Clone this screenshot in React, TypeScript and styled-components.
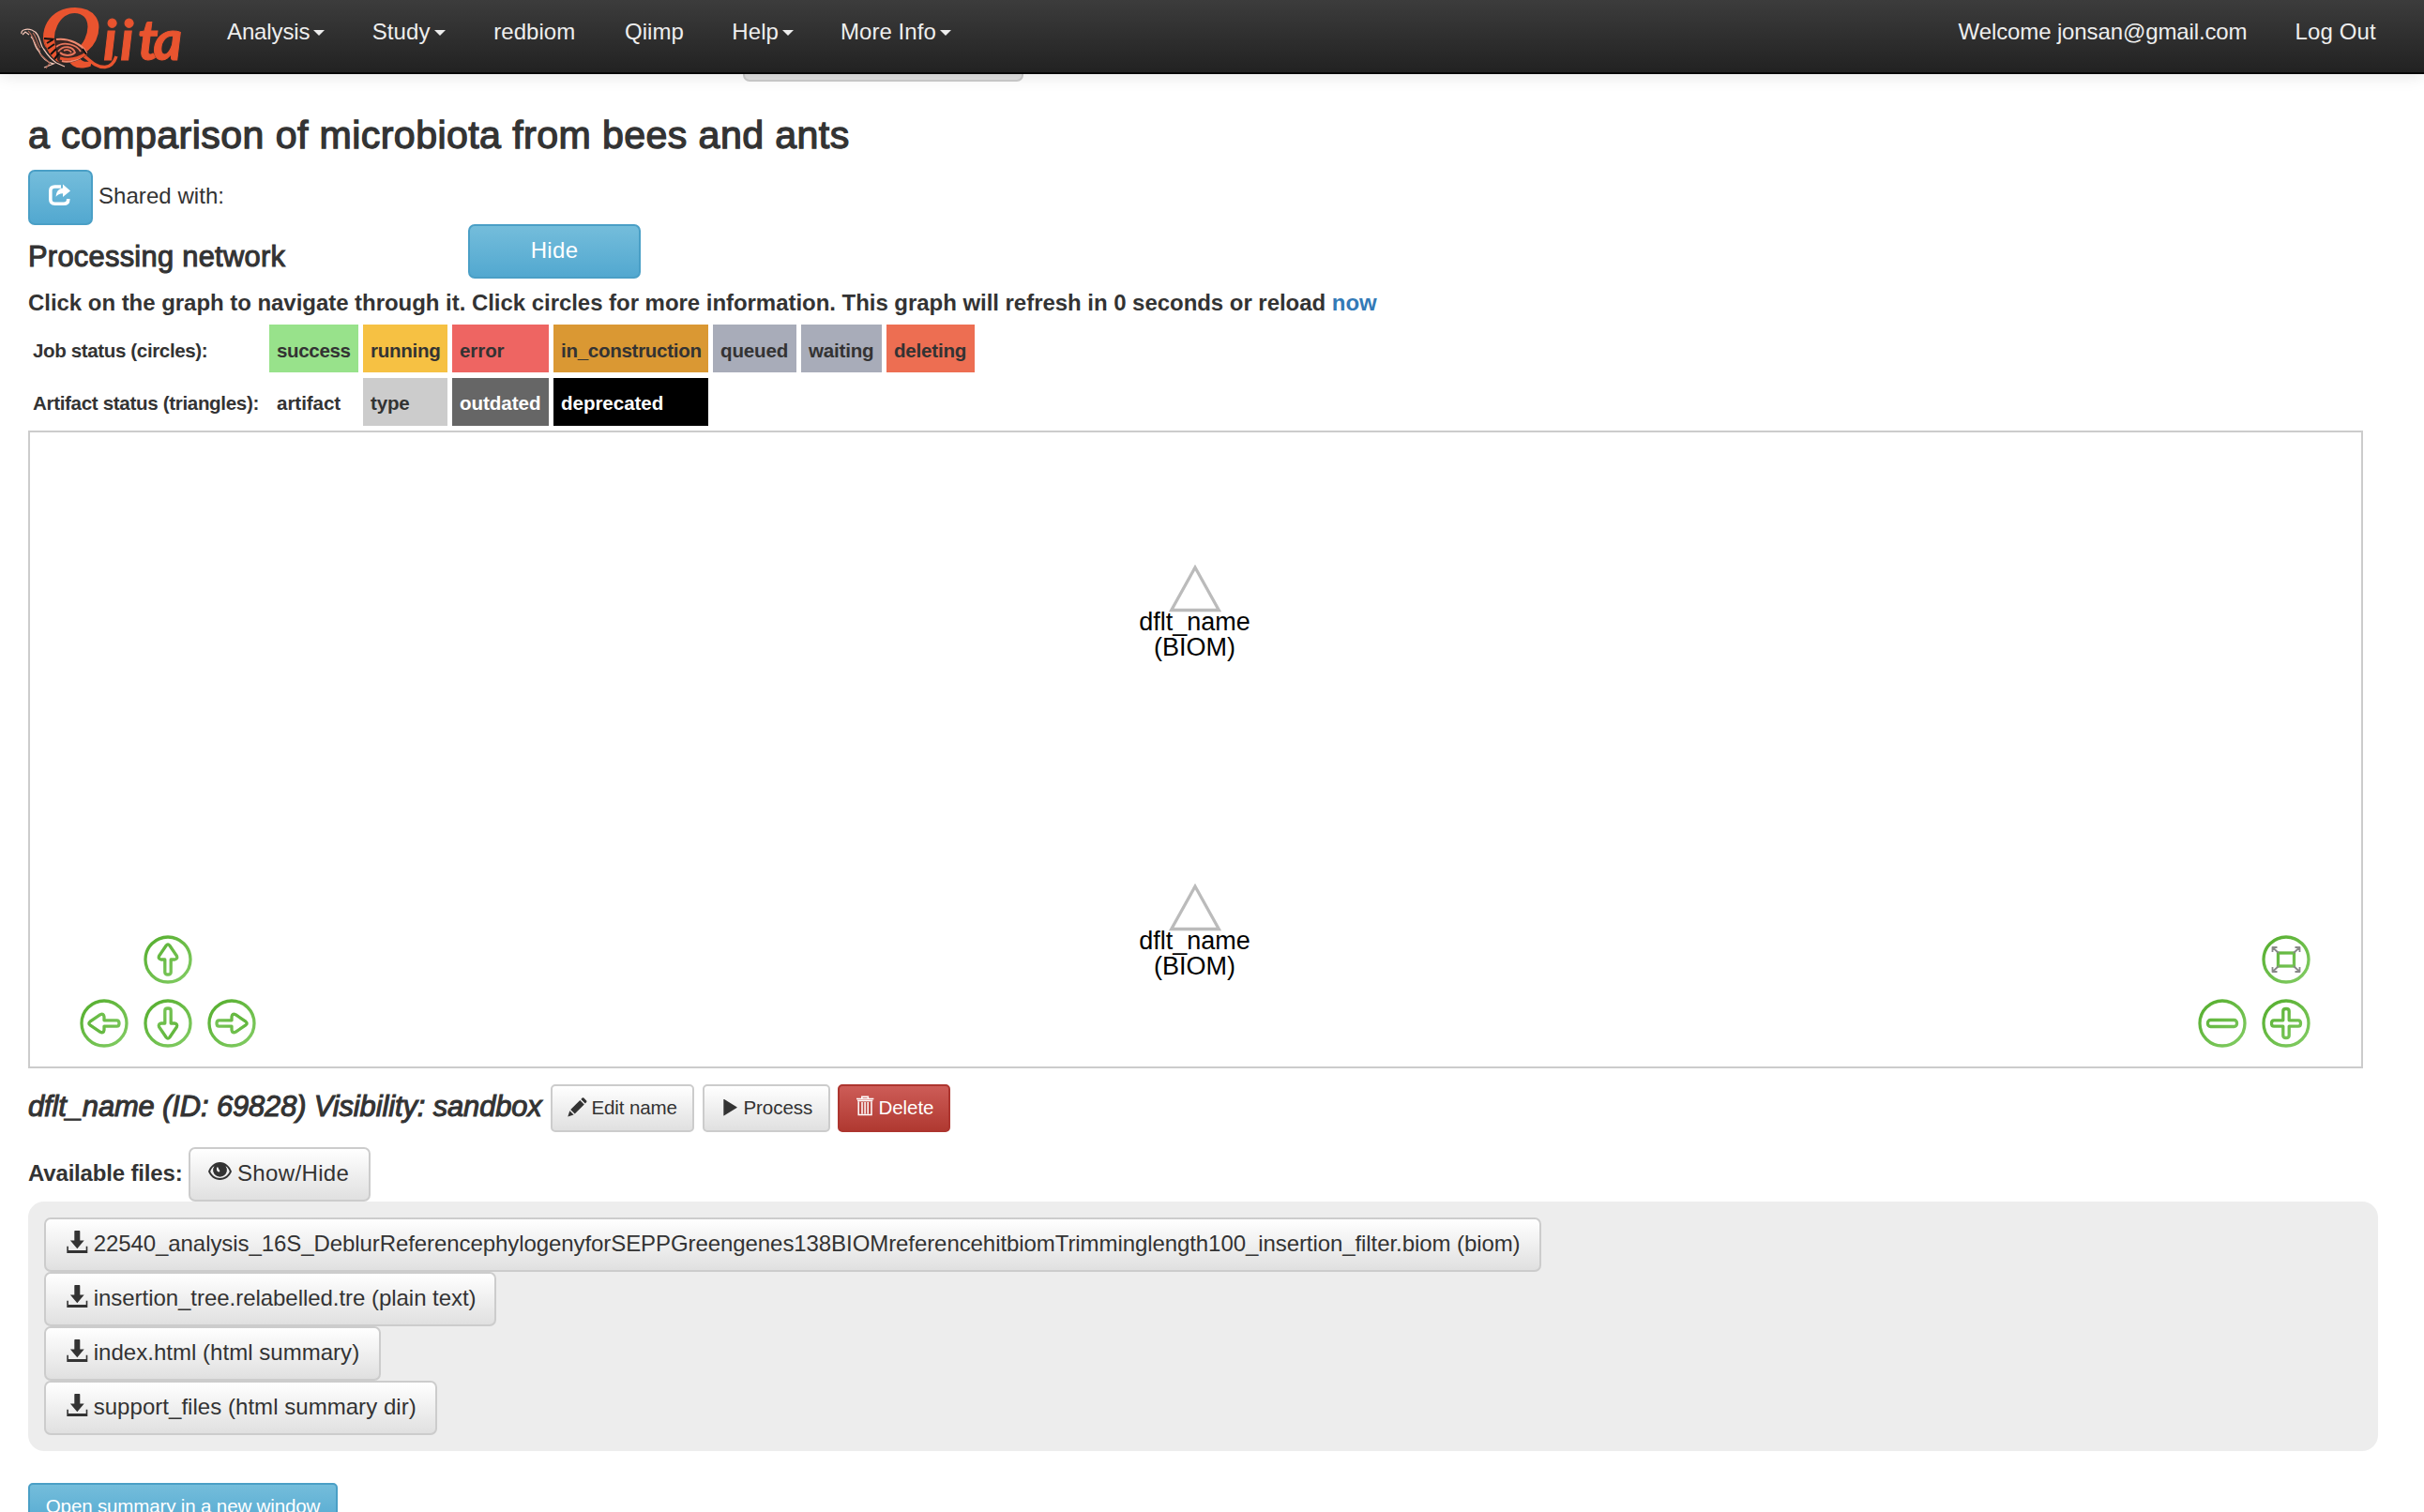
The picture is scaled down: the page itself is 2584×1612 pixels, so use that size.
import React from 'react';
import styled, { createGlobalStyle, css } from 'styled-components';

const Global = createGlobalStyle`
  html, body { margin: 0; padding: 0; background: #fff; }
  * { box-sizing: border-box; }
  body { font-family: "Liberation Sans", Arial, sans-serif; font-size: 24px; line-height: 34px; color: #333; overflow: hidden; }
`;

const Page = styled.div`
  width: 2584px;
  height: 1612px;
  overflow: hidden;
  display: flex;
  flex-direction: column;
`;

const Label = styled.span<{ $ls?: number }>`
  letter-spacing: ${p => p.$ls ?? 0}px;
  white-space: pre;
`;

const Nav = styled.nav`
  height: 79px;
  flex: none;
  display: flex;
  align-items: flex-start;
  position: relative;
  background: linear-gradient(#3c3c3c, #222);
  border-bottom: 2px solid #080808;
  box-shadow: 0 2px 17px rgba(0, 0, 0, 0.1);
  color: #eee;
`;
const Brand = styled.a`
  width: 242px;
  height: 77px;
  flex: none;
`;
const NavItem = styled.a<{ $w: number }>`
  width: ${p => p.$w}px;
  flex: none;
  padding-top: 17px;
  display: flex;
  gap: 4px;
`;
const Caret = styled.i`
  width: 0;
  height: 0;
  margin-top: 15px;
  border: 6px solid transparent;
  border-top-color: #eee;
  border-bottom: 0;
`;
const NavRight = styled.div`
  margin-left: auto;
  display: flex;
`;

const Main = styled.main`
  padding-left: 30px;
  display: flex;
  flex-direction: column;
  align-items: flex-start;
`;
const HiddenButtonEdge = styled.div`
  width: 299px;
  height: 8px;
  margin-left: 762px;
  background: #e0e0e0;
  border: 2px solid #ccc;
  border-top: 0;
  border-radius: 0 0 7px 7px;
`;
const Title = styled.h3`
  margin: 34px 0 14px;
  font-size: 41.14px;
  line-height: 46px;
  font-weight: 400;
  -webkit-text-stroke: 1.3px #333;
`;
const Row = styled.div<{ $mt?: number }>`
  display: flex;
  align-items: flex-start;
  margin-top: ${p => p.$mt ?? 0}px;
`;
const SharedWith = styled.div`
  padding: 11px 0 0 6px;
`;
const Heading = styled.h4<{ $w: number; $pt: number; $italic?: boolean }>`
  margin: 0;
  width: ${p => p.$w}px;
  padding-top: ${p => p.$pt}px;
  font-size: 30.86px;
  line-height: 35px;
  font-weight: 400;
  font-style: ${p => (p.$italic ? 'italic' : 'normal')};
  -webkit-text-stroke: 1.05px #333;
`;

const tones = {
  info: css`
    background: linear-gradient(#74bddb, #52a8d0);
    border-color: #4a9fc6;
    color: #fff;
  `,
  plain: css`
    background: linear-gradient(#fff, #e0e0e0);
    border-color: #ccc;
    color: #333;
  `,
  danger: css`
    background: linear-gradient(#cd5c57, #b03931);
    border-color: #ad352f;
    color: #fff;
  `,
};
const Button = styled.button<{ $tone: keyof typeof tones; $w: number; $h?: number; $small?: boolean; $center?: boolean; $ml?: number }>`
  flex: none;
  width: ${p => p.$w}px;
  height: ${p => p.$h ?? (p.$small ? 51 : 58)}px;
  margin: 0 0 0 ${p => p.$ml ?? 0}px;
  padding: ${p => (p.$small ? '7px 0 0 16px' : '9px 0 0 20.5px')};
  border: 2px solid;
  border-radius: ${p => (p.$small ? 5 : 7)}px;
  font-family: inherit;
  font-size: ${p => (p.$small ? 20.57 : 24)}px;
  line-height: ${p => (p.$small ? 31 : 34)}px;
  display: flex;
  align-items: flex-start;
  gap: ${p => (p.$small ? 4.5 : 6.2)}px;
  ${p => tones[p.$tone]}
  ${p => p.$center && css`padding-left: 0; padding-right: 0; justify-content: center;`}
`;

const Hint = styled.p`
  margin: 9px 0 6px;
  height: 34px;
  font-weight: 700;
  a { color: #337ab7; }
`;

const StatusGrid = styled.div`
  margin: 0 0 5px 5px;
  display: grid;
  grid-template-columns: 247px 95px 90px 103px 165px 89px 86px 94px;
  grid-auto-rows: 51px;
  row-gap: 6px;
  column-gap: 5px;
  font-size: 20.57px;
  font-weight: 700;
`;
const Status = styled.div<{ $bg?: string; $fg?: string; $pl?: number; $pt?: number }>`
  background: ${p => p.$bg ?? 'transparent'};
  color: ${p => p.$fg ?? '#333'};
  padding: ${p => p.$pt ?? 3}px 0 0 ${p => p.$pl ?? 8}px;
  line-height: 47px;
`;

const Graph = styled.section`
  width: 2489px;
  height: 680px;
  border: 2px solid #ccc;
  position: relative;
`;
const Node = styled.div<{ $x: number; $y: number }>`
  position: absolute;
  left: ${p => p.$x}px;
  top: ${p => p.$y}px;
  width: 140px;
  display: flex;
  flex-direction: column;
  align-items: center;
  color: #000;
  font-size: 27px;
  line-height: 27px;
  svg { margin-bottom: -4px; }
`;
const Control = styled.svg<{ $x: number; $y: number }>`
  position: absolute;
  left: ${p => p.$x}px;
  top: ${p => p.$y}px;
  width: 52px;
  height: 52px;
  fill: none;
  stroke: url(#leaf);
  stroke-width: 3.3;
  stroke-linejoin: round;
`;

const FilesLabel = styled.b`
  width: 171px;
  padding-top: 11px;
`;
const Files = styled.div`
  width: 2505px;
  height: 266px;
  padding: 17px;
  background: #ededed;
  border-radius: 17px;
  display: flex;
  flex-direction: column;
  align-items: flex-start;
`;

const Glyph = styled.svg<{ $dy?: number; $dx?: number }>`
  flex: none;
  fill: currentColor;
  margin-top: ${p => p.$dy ?? 0}px;
  margin-left: ${p => p.$dx ?? 0}px;
`;

const ShareIcon = () => (
  <Glyph width="24" height="24" viewBox="0 0 24 24" $dy={4} $dx={-1}>
    <path d="M13 3H6.500Q1.800 3 1.800 7.500V16.500Q1.800 21.200 6.500 21.200H16Q20.700 21.200 20.700 17V16" fill="none" stroke="currentColor" strokeWidth="3.600" />
    <path d="M15 .5 23 7.500 15 14V10.300C11.500 10.300 9.500 11.500 7.600 13.800 8 8.500 10.500 5.200 15 4.600Z" />
  </Glyph>
);
const EyeIcon = () => (
  <Glyph width="25" height="22" viewBox="0 0 25 22" $dy={4} $dx={-1.7}>
    <path fillRule="evenodd" d="M12.500 1C6.500 1 2 5.500 0 11c2 5 6.500 9 12.500 9S23 16 25 11C23 5.500 18.500 1 12.500 1ZM6.500 5.200A7 7 0 0 0 9 15.800c2 1.100 5 1.100 7 0A7 7 0 0 0 18.500 5.200C20.800 6.500 22 8.500 22.800 11 21 15 17.500 18 12.500 18S4 15 2.200 11C3 8.500 4.200 6.500 6.500 5.200ZM9.500 6.300C8.300 8.300 9 11 11 11.600 12.600 11.800 12.600 10 11.600 9 10.600 8 11 6.500 9.500 6.300Z" />
  </Glyph>
);
const DownloadIcon = () => (
  <Glyph width="24" height="25" viewBox="-1.300 0 24 25" $dy={3}>
    <path d="M8.700 0H13.300Q14 0 14 .8V10.500H18.400L11 19.300 3.600 10.500H8V.8Q8 0 8.700 0ZM0 16.700H1.600V21H20.400V16.700H22V24H0Z" />
  </Glyph>
);
const PencilIcon = () => (
  <Glyph width="21" height="21" viewBox="0 0 21 21" $dy={5}>
    <path d="M.3 20.500 2.300 14.200 6.600 18.500ZM3.200 13.100 13.300 3 17.800 7.500 7.700 17.600ZM14.300 2 15.700.6Q16.500 0 17.300.6L20.200 3.500Q20.800 4.300 20.200 5.100L18.800 6.500Z" />
  </Glyph>
);
const PlayIcon = () => (
  <Glyph width="21" height="21" viewBox="0 0 21 21" $dy={5}>
    <path d="M4.300 2.500Q4.300 1.700 5.100 2.100L18.500 10.300Q19 10.700 18.500 11.100L5.100 19.300Q4.300 19.700 4.300 18.900Z" />
  </Glyph>
);
const TrashIcon = () => (
  <Glyph width="21" height="23" viewBox="0 0 21 23" $dy={3}>
    <path d="M2 3.600H20.400M7.800 3.500V1.300H14.400V3.500M4.200 6.500V20.500H18V6.500M8 7V19.500M11.100 7V19.500M14.200 7V19.500M3 5.500H19.300" fill="none" stroke="currentColor" strokeWidth="1.500" />
  </Glyph>
);

const Logo = () => (
  <svg width="200" height="77" viewBox="0 0 200 77">
    <g fill="#e9542f" stroke="#e9542f" fontStyle="italic">
      <text transform="translate(43 58.500) scale(1.150 1)" fontFamily="Liberation Serif, serif" fontSize="75" strokeWidth="3">Q</text>
      <text x="110 128 147 163.500" y="64" fontFamily="Lato, sans-serif" fontWeight="700" fontSize="59" strokeWidth="1">iita</text>
    </g>
    <path d="M82 55C92 58 98 72 112 71.500 119 71 122 66 124 60" fill="none" stroke="#e9542f" strokeWidth="3.500" />
    <path d="M47 42C58 38 84 44 94 56 88 66 70 68 64 67 54 62 49 52 47 42Z" fill="#3a2522" />
    <path d="M47 42H58L61 64 64 67C54 62 49 52 47 42Z" fill="#e9542f" />
    <path d="M60 42C74 40 88 48 92 56 84 65 72 67 66 65" fill="none" stroke="#ef8a70" strokeWidth="2" />
    <path d="M60 50C68 43 82 48 86 55M62 55C68 47 78 50 80 56 76 60 68 60 64 56M68 54C72 52 75 54 76 56" fill="none" stroke="#e8765c" strokeWidth="1.800" />
    <path d="M64 62Q78 66 92 57" fill="none" stroke="#e9542f" strokeWidth="3" />
    <path d="M47 41 57 42M50 46 57 42M51 52 58 47M54 58 60 52M58 63 63 57M88 52 92 58" stroke="#111" strokeWidth="2" fill="none" />
    <path d="M23 36C22 32 28 30 34 32 42 35 42 44 45 50 49 56 52 62 60 67M33 39C37 42 36 49 41 54 43 58 47 66 57 68L47 72M60 67 69 71M24 37 27 34 31 37" fill="none" stroke="#f2c4b5" strokeWidth="1.300" />
    <path d="M30 33C36 38 36 46 43 55M42 57 53 67 49 73M35 35C39 39 39 46 43 51" fill="none" stroke="#b06654" strokeWidth="1.100" />
  </svg>
);

const arrow = 'M24.200 11Q26 8.700 27.800 11L35.300 22Q36.800 25.500 33 26H29.200V39.500Q29.200 42 26 42T22.800 39.500V26H19Q15.200 25.500 16.700 22Z';
const Arrow = ({ x, y, turn }: { x: number; y: number; turn: number }) => (
  <Control $x={x} $y={y} viewBox="0 0 52 52">
    <circle cx="26" cy="26" r="24" />
    <path d={arrow} transform={`rotate(${turn} 26 26)`} />
  </Control>
);

const nav: [string, number, boolean, number][] = [
  ['Analysis', 154.7, true, -0.12],
  ['Study', 129.5, true, 0.1],
  ['redbiom', 139.8, false, 0.05],
  ['Qiimp', 114.3, false, 0.05],
  ['Help', 115.7, true, 0.1],
  ['More Info', 130, true, 0.05],
];
const jobs: [string, string, number][] = [
  ['success', '#98e28b', -0.36],
  ['running', '#f6c143', -0.28],
  ['error', '#ee6562', -0.1],
  ['in_construction', '#da9833', -0.3],
  ['queued', '#a8acb9', -0.18],
  ['waiting', '#a8acb9', -0.2],
  ['deleting', '#ed6e52', -0.2],
];
const artifacts: [string, string, string, number][] = [
  ['artifact', '#fff', '#333', -0.05],
  ['type', '#ccc', '#333', -0.2],
  ['outdated', '#666', '#fff', -0.05],
  ['deprecated', '#000', '#fff', -0.05],
];
const files: [string, number, number][] = [
  ['22540_analysis_16S_DeblurReferencephylogenyforSEPPGreengenes138BIOMreferencehitbiomTrimminglength100_insertion_filter.biom (biom)', 1596, -0.076],
  ['insertion_tree.relabelled.tre (plain text)', 482, -0.04],
  ['index.html (html summary)', 359, 0.03],
  ['support_files (html summary dir)', 419, 0.04],
];

const GraphNode = ({ y }: { y: number }) => (
  <Node $x={1171.5} $y={y}>
    <svg width="56" height="52" viewBox="0 0 56 52">
      <path d="M28 3 53.300 48.500H2.700Z" fill="#fff" stroke="#bbb" strokeWidth="3.300" />
    </svg>
    <Label>dflt_name</Label>
    <Label>(BIOM)</Label>
  </Node>
);

export default function App() {
  return (
    <>
      <Global />
      <Page>
        <Nav>
          <Brand><Logo /></Brand>
          {nav.map(([t, w, caret, ls]) => (
            <NavItem key={t} $w={w}><Label $ls={ls}>{t}</Label>{caret && <Caret />}</NavItem>
          ))}
          <NavRight>
            <NavItem $w={359}><Label $ls={-0.12}>Welcome jonsan@gmail.com</Label></NavItem>
            <NavItem $w={137.4}><Label $ls={0.1}>Log Out</Label></NavItem>
          </NavRight>
        </Nav>
        <Main>
          <HiddenButtonEdge />
          <Title><Label $ls={0.41}>a comparison of microbiota from bees and ants</Label></Title>
          <Row>
            <Button $tone="info" $w={69} $h={59}><ShareIcon /></Button>
            <SharedWith><Label $ls={0.05}>Shared with:</Label></SharedWith>
          </Row>
          <Row $mt={-1}>
            <Heading $w={469} $pt={17}><Label $ls={0.27}>Processing network</Label></Heading>
            <Button $tone="info" $w={184} $center><Label $ls={0.3}>Hide</Label></Button>
          </Row>
          <Hint>
            <Label $ls={-0.041}>Click on the graph to navigate through it. Click circles for more information. This graph will refresh in 0 seconds or reload <a>now</a></Label>
          </Hint>
          <StatusGrid>
            <Status $pl={0} $pt={4}><Label $ls={-0.38}>Job status (circles):</Label></Status>
            {jobs.map(([t, bg, ls]) => <Status key={t} $bg={bg} $pt={4}><Label $ls={ls}>{t}</Label></Status>)}
            <Status $pl={0} $pt={3}><Label $ls={-0.33}>Artifact status (triangles):</Label></Status>
            {artifacts.map(([t, bg, fg, ls]) => <Status key={t} $bg={bg} $fg={fg} $pt={3}><Label $ls={ls}>{t}</Label></Status>)}
          </StatusGrid>
          <Graph>
            <svg width="0" height="0">
              <linearGradient id="leaf" gradientUnits="userSpaceOnUse" x1="8" y1="4" x2="44" y2="48">
                <stop offset="0" stopColor="#58b031" />
                <stop offset="1" stopColor="#7fca60" />
              </linearGradient>
            </svg>
            <GraphNode y={141} />
            <GraphNode y={480.5} />
            <Arrow x={121.2} y={535.7} turn={0} />
            <Arrow x={53.2} y={603.7} turn={270} />
            <Arrow x={121.2} y={603.7} turn={180} />
            <Arrow x={189.2} y={603.7} turn={90} />
            <Control $x={2379.2} $y={535.7} viewBox="0 0 52 52">
              <circle cx="26" cy="26" r="24" />
              <rect x="17.500" y="19" width="17" height="14" strokeLinejoin="miter" />
              <path d="M18 19 12 13.500M11.500 18V13H16.500M34 19 40 13.500M40.500 18V13H35.500M18 33 12 38.500M11.500 34V39H16.500M34 33 40 38.500M40.500 34V39H35.500" stroke="#888" strokeWidth="1.800" />
            </Control>
            <Control $x={2311.2} $y={603.7} viewBox="0 0 52 52">
              <circle cx="26" cy="26" r="24" />
              <rect x="10.500" y="22.500" width="31" height="7" rx="3" />
            </Control>
            <Control $x={2379.2} $y={603.7} viewBox="0 0 52 52">
              <circle cx="26" cy="26" r="24" />
              <path d="M22.800 22.800V13Q22.800 10.500 26 10.500T29.200 13V22.800H39Q41.500 22.800 41.500 26T39 29.200H29.200V39Q29.200 41.500 26 41.500T22.800 39V29.200H13Q10.500 29.200 10.500 26T13 22.800Z" />
            </Control>
          </Graph>
          <Row $mt={17}>
            <Heading $w={557} $pt={6} $italic><Label $ls={-0.1}>dflt_name (ID: 69828) Visibility: sandbox</Label></Heading>
            <Button $tone="plain" $small $w={153}><PencilIcon /><Label $ls={-0.15}>Edit name</Label></Button>
            <Button $tone="plain" $small $w={136} $ml={9}><PlayIcon /><Label $ls={-0.1}>Process</Label></Button>
            <Button $tone="danger" $small $w={120} $ml={8}><TrashIcon /><Label $ls={-0.1}>Delete</Label></Button>
          </Row>
          <Row $mt={16}>
            <FilesLabel><Label $ls={-0.17}>Available files:</Label></FilesLabel>
            <Button $tone="plain" $w={194}><EyeIcon /><Label $ls={0.35}>Show/Hide</Label></Button>
          </Row>
          <Files>
            {files.map(([t, w, ls]) => (
              <Button key={t} $tone="plain" $w={w}><DownloadIcon /><Label $ls={ls}>{t}</Label></Button>
            ))}
          </Files>
          <Row $mt={34}>
            <Button $tone="info" $small $center $w={330}><Label $ls={-0.17}>Open summary in a new window</Label></Button>
          </Row>
        </Main>
      </Page>
    </>
  );
}
